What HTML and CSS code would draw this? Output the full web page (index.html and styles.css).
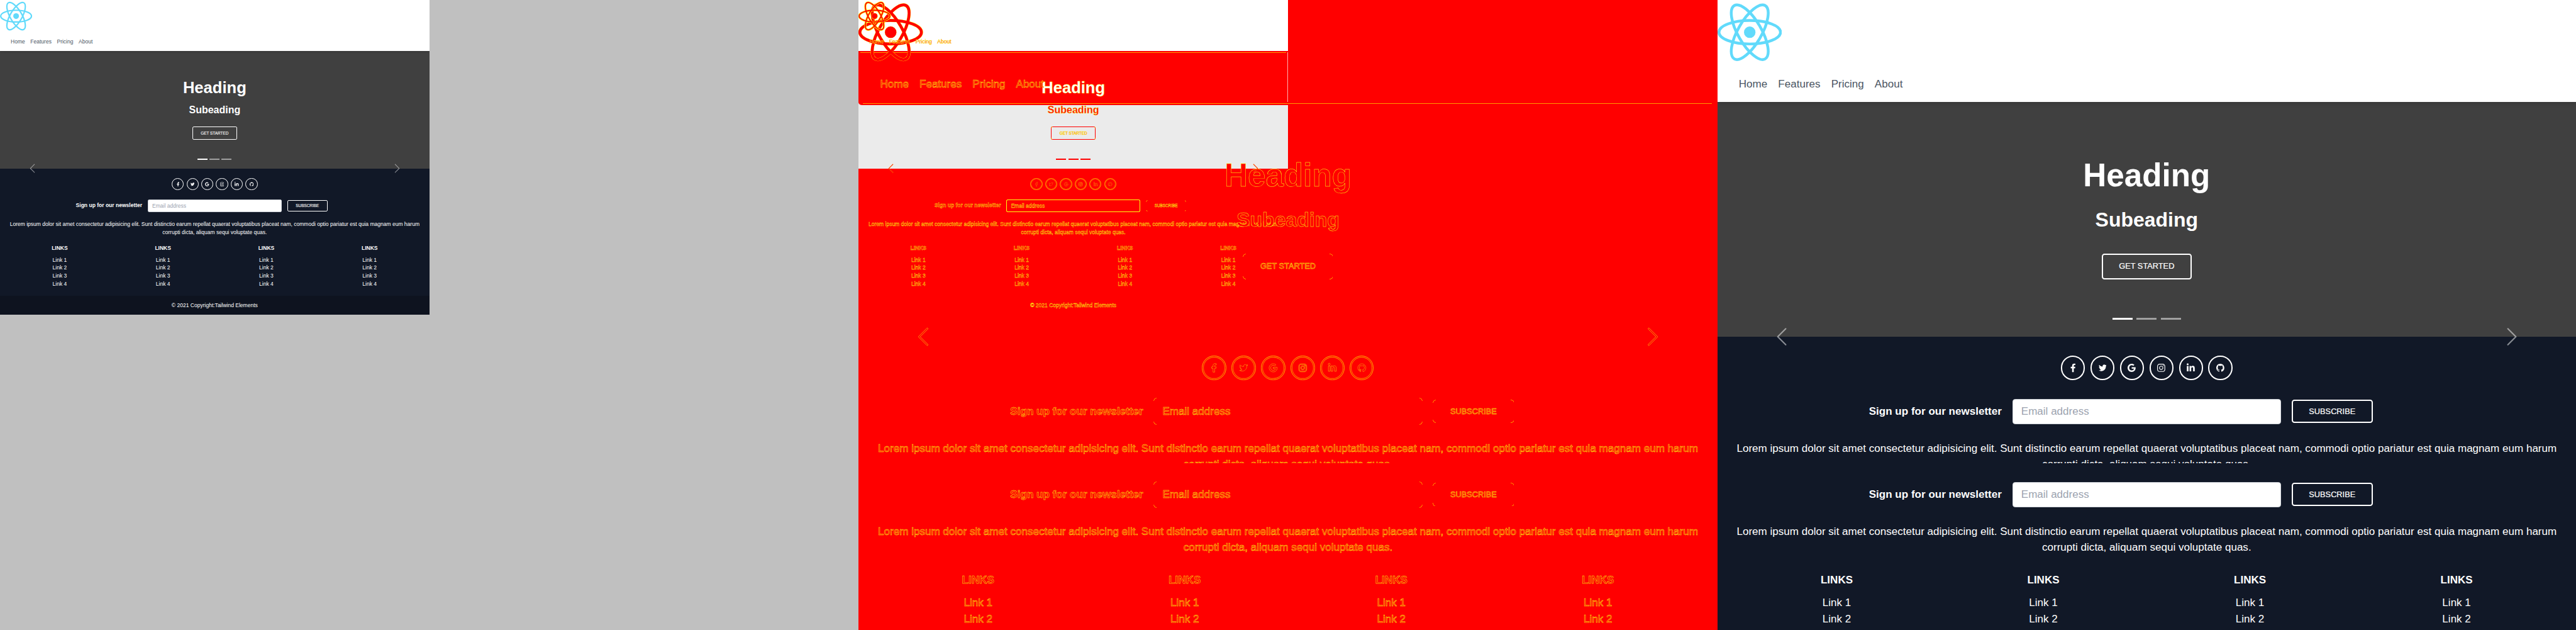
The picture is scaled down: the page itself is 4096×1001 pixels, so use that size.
FILE: index.html
```html
<!DOCTYPE html>
<html lang="en">
<head>
<meta charset="utf-8">
<title>Visual comparison</title>
<link rel="stylesheet" href="styles.css">
</head>
<body>
<main class="compare">
  <section class="panel panel-before">
    <div class="slice slice-full small" data-page></div>
  </section>
  <section class="panel panel-diff">
    <div class="match match-nav"></div>
    <div class="match match-hero"></div>
    <div class="edge edge-upper"></div>
    <div class="edge edge-lower"></div>
    <div class="edge-side"></div>
    <div class="layer large outline" data-stitched></div>
    <div class="layer small outline outline-small" data-page></div>
  </section>
  <section class="panel panel-after">
    <div class="large" data-stitched></div>
  </section>
</main>

<template id="page">
  <div class="page">
    <nav class="nav">
      <svg class="logo" viewBox="-11.5 -10.23174 23 20.46348">
        <g class="logo-rim">
          <circle r="2.05"/>
          <ellipse rx="11" ry="4.2"/>
          <ellipse rx="11" ry="4.2" transform="rotate(60)"/>
          <ellipse rx="11" ry="4.2" transform="rotate(120)"/>
        </g>
        <circle r="2.05" class="logo-core"/>
        <g class="logo-orbits">
          <ellipse rx="11" ry="4.2"/>
          <ellipse rx="11" ry="4.2" transform="rotate(60)"/>
          <ellipse rx="11" ry="4.2" transform="rotate(120)"/>
        </g>
      </svg>
      <div class="nav-links"><a>Home</a><a>Features</a><a>Pricing</a><a>About</a></div>
    </nav>
    <header class="hero">
      <h1>Heading</h1>
      <h2>Subeading</h2>
      <a class="btn btn-hero">GET STARTED</a>
      <div class="indicators"><i class="on"></i><i></i><i></i></div>
      <svg class="chev chev-prev" viewBox="0 0 16 16"><path d="M11.354 1.646a.5.5 0 0 1 0 .708L5.707 8l5.647 5.646a.5.5 0 0 1-.708.708l-6-6a.5.5 0 0 1 0-.708l6-6a.5.5 0 0 1 .708 0z"/></svg>
      <svg class="chev chev-next" viewBox="0 0 16 16"><path d="M4.646 1.646a.5.5 0 0 1 .708 0l6 6a.5.5 0 0 1 0 .708l-6 6a.5.5 0 0 1-.708-.708L10.293 8 4.646 2.354a.5.5 0 0 1 0-.708z"/></svg>
    </header>
    <footer class="footer">
      <div class="footer-body">
        <div class="social">
          <a><svg class="fb" viewBox="0 0 320 512"><path d="M279.14 288l14.22-92.66h-88.91v-60.13c0-25.35 12.42-50.06 52.24-50.06h40.42V6.26S260.43 0 225.36 0c-73.22 0-121.08 44.38-121.08 124.72v70.62H22.89V288h81.39v224h100.17V288z"/></svg></a>
          <a><svg viewBox="0 0 512 512"><path d="M459.37 151.716c.325 4.548.325 9.097.325 13.645 0 138.72-105.583 298.558-298.558 298.558-59.452 0-114.68-17.219-161.137-47.106 8.447.974 16.568 1.299 25.34 1.299 49.055 0 94.213-16.568 130.274-44.832-46.132-.975-84.792-31.188-98.112-72.772 6.498.974 12.995 1.624 19.818 1.624 9.421 0 18.843-1.3 27.614-3.573-48.081-9.747-84.143-51.98-84.143-102.985v-1.299c13.969 7.797 30.214 12.67 47.431 13.319-28.264-18.843-46.781-51.005-46.781-87.391 0-19.492 5.197-37.36 14.294-52.954 51.655 63.675 129.3 105.258 216.365 109.807-1.624-7.797-2.599-15.918-2.599-24.04 0-57.828 46.782-104.934 104.934-104.934 30.213 0 57.502 12.67 76.67 33.137 23.715-4.548 46.456-13.32 66.599-25.34-7.798 24.366-24.366 44.833-46.132 57.827 21.117-2.273 41.584-8.122 60.426-16.243-14.292 20.791-32.161 39.308-52.628 54.253z"/></svg></a>
          <a><svg viewBox="0 0 488 512"><path d="M488 261.8C488 403.3 391.1 504 248 504 110.8 504 0 393.2 0 256S110.8 8 248 8c66.8 0 123 24.5 166.3 64.9l-67.5 64.9C258.5 52.6 94.3 116.6 94.3 256c0 86.5 69.1 156.6 153.7 156.6 98.2 0 135-70.4 140.8-106.9H248v-85.3h236.1c2.3 12.7 3.9 24.9 3.9 41.4z"/></svg></a>
          <a><svg viewBox="0 0 448 512"><path d="M224.1 141c-63.6 0-114.9 51.3-114.9 114.9s51.3 114.9 114.9 114.9S339 319.5 339 255.900 287.700 141 224.100 141zm0 189.600c-41.100 0-74.700-33.500-74.700-74.700s33.500-74.700 74.700-74.700 74.700 33.500 74.700 74.700-33.600 74.700-74.700 74.700zm146.400-194.300c0 14.900-12 26.800-26.800 26.800-14.900 0-26.800-12-26.800-26.800s12-26.800 26.800-26.800 26.800 12 26.800 26.800zm76.100 27.200c-1.700-35.900-9.900-67.700-36.200-93.900-26.200-26.200-58-34.400-93.900-36.200-37-2.100-147.900-2.100-184.900 0-35.800 1.700-67.600 9.900-93.900 36.100s-34.400 58-36.200 93.900c-2.100 37-2.100 147.900 0 184.900 1.700 35.900 9.900 67.700 36.200 93.900s58 34.400 93.900 36.200c37 2.100 147.900 2.100 184.900 0 35.900-1.700 67.700-9.900 93.900-36.200 26.200-26.200 34.400-58 36.200-93.900 2.100-37 2.100-147.800 0-184.800zM398.800 388c-7.800 19.600-22.900 34.700-42.600 42.600-29.500 11.700-99.500 9-132.100 9s-102.700 2.600-132.100-9c-19.600-7.800-34.700-22.900-42.600-42.600-11.700-29.500-9-99.500-9-132.100s-2.600-102.700 9-132.100c7.800-19.600 22.900-34.700 42.600-42.600 29.500-11.700 99.500-9 132.100-9s102.700-2.600 132.100 9c19.600 7.800 34.700 22.900 42.600 42.600 11.700 29.500 9 99.500 9 132.100s2.700 102.700-9 132.100z"/></svg></a>
          <a><svg viewBox="0 0 448 512"><path d="M100.28 448H7.4V148.9h92.88zM53.79 108.100C24.090 108.100 0 83.500 0 53.800a53.790 53.790 0 0 1 107.580 0c0 29.700-24.100 54.300-53.790 54.300zM447.900 448h-92.680V302.400c0-34.700-.7-79.200-48.290-79.200-48.290 0-55.690 37.700-55.690 76.700V448h-92.780V148.900h89.080v40.800h1.300c12.400-23.500 42.690-48.300 87.880-48.300 94 0 111.280 61.900 111.280 142.300V448z"/></svg></a>
          <a><svg viewBox="0 0 16 16"><path d="M8 0C3.58 0 0 3.58 0 8c0 3.54 2.29 6.530 5.470 7.590.4.070.55-.17.55-.38 0-.19-.01-.82-.01-1.490-2.010.37-2.530-.49-2.690-.94-.09-.23-.48-.94-.82-1.130-.28-.15-.68-.52-.01-.53.63-.01 1.080.58 1.230.82.72 1.210 1.870.87 2.330.66.07-.52.28-.87.51-1.070-1.780-.2-3.640-.89-3.640-3.950 0-.87.31-1.590.82-2.150-.08-.2-.36-1.020.08-2.120 0 0 .67-.21 2.200.82.64-.18 1.320-.27 2-.27s1.360.09 2 .27c1.530-1.040 2.200-.82 2.200-.82.44 1.100.16 1.920.08 2.120.51.56.82 1.270.82 2.150 0 3.070-1.870 3.750-3.650 3.950.29.25.54.73.54 1.480 0 1.070-.01 1.930-.01 2.200 0 .21.15.46.55.38A8.010 8.010 0 0 0 16 8c0-4.420-3.580-8-8-8z"/></svg></a>
        </div>
        <div class="signup">
          <strong>Sign up for our newsletter</strong>
          <div class="field">Email address</div>
          <div><a class="btn btn-sub">SUBSCRIBE</a></div>
        </div>
        <p class="lorem">Lorem ipsum dolor sit amet consectetur adipisicing elit. Sunt distinctio earum repellat quaerat voluptatibus placeat nam, commodi optio pariatur est quia magnam eum harum<br>corrupti dicta, aliquam sequi voluptate quas.</p>
        <div class="link-grid">
          <ul><li class="title">LINKS</li><li>Link 1</li><li>Link 2</li><li>Link 3</li><li>Link 4</li></ul>
          <ul><li class="title">LINKS</li><li>Link 1</li><li>Link 2</li><li>Link 3</li><li>Link 4</li></ul>
          <ul><li class="title">LINKS</li><li>Link 1</li><li>Link 2</li><li>Link 3</li><li>Link 4</li></ul>
          <ul><li class="title">LINKS</li><li>Link 1</li><li>Link 2</li><li>Link 3</li><li>Link 4</li></ul>
        </div>
      </div>
      <div class="copyright">© 2021 Copyright:Tailwind Elements</div>
    </footer>
  </div>
</template>
<script src="app.js"></script>
</body>
</html>
```
FILE: styles.css
```css
* { box-sizing: border-box; margin: 0; padding: 0; }
body { background: #c0c0c0; font-family: "Liberation Sans", Arial, sans-serif; overflow: hidden; }
.compare { display: grid; grid-template-columns: repeat(3, 1fr); width: 4096px; height: 1001px; }
.panel { position: relative; overflow: hidden; }
.small { zoom: 0.533333; }
.large { zoom: 1.066667; }
.slice { width: 1280px; overflow: hidden; }
.slice-full { height: 938px; }
.slice-top { height: 690px; }
.slice-rest { height: 250px; }
.slice-rest .page { margin-top: -566.2px; }

/* one captured page, 1280 wide */
.page { width: 1280px; height: 938px; font-size: 16px; line-height: 24px; color: #fff; }
.nav { position: relative; z-index: 2; height: 152px; background: #fff; box-shadow: 0 4px 6px -1px rgba(0,0,0,.1), 0 2px 4px -1px rgba(0,0,0,.06); }
.logo { display: block; width: 96px; height: 96px; }
.logo-rim { display: none; fill: none; }
.logo-core { fill: #61dafb; }
.logo-orbits { fill: none; stroke: #61dafb; stroke-width: 1; }
.nav-links { display: flex; gap: 16px; padding: 17px 32px 15px; color: #4b5563; }
.hero { position: relative; z-index: 1; height: 350px; background: #404040; display: flex; flex-direction: column; align-items: center; justify-content: center; }
.hero h1 { font-size: 48px; line-height: 48px; margin-bottom: 24px; }
.hero h2 { font-size: 30px; line-height: 36px; margin-bottom: 32px; }
.btn { position: relative; display: inline-block; border: 2px solid #fff; border-radius: 4px; font-size: 12px; line-height: 15px; white-space: nowrap; -webkit-text-stroke: 0.2px currentColor; }
.btn-hero { padding: 10px 24px; }
.btn-sub { padding: 8px 24px; display: block; }
.indicators { position: absolute; bottom: 26px; left: 589px; display: flex; gap: 6px; }
.indicators i { width: 30px; height: 3px; background: #fff; opacity: .5; }
.indicators .on { opacity: 1; }
.chev { position: absolute; top: 334px; width: 32px; height: 32px; fill: #fff; opacity: .5; }
.chev-prev { left: 80px; }
.chev-next { right: 80px; }
.footer { background: #111827; text-align: center; }
.footer-body { padding: 28px 24px 24px; }
.social { display: flex; justify-content: center; gap: 8px; }
.social a { display: flex; align-items: center; justify-content: center; width: 36px; height: 36px; border: 2px solid #fff; border-radius: 50%; }
.social svg { width: 12px; height: 14px; fill: #fff; }
.social .fb { width: 8px; }
.signup { display: grid; grid-template-columns: repeat(3, 400px); gap: 16px; align-items: center; margin: 28px 0 24px; }
.signup strong { text-align: right; }
.signup > div:last-child { display: flex; }
.field { position: relative; height: 38px; padding: 6px 12px; background: #fff; border: 1px solid #d1d5db; border-radius: 4px; color: #9ca3af; text-align: left; }
.lorem { white-space: nowrap; margin-bottom: 24.5px; }
.link-grid { display: grid; grid-template-columns: repeat(4, 1fr); margin-bottom: -.5px; }
.link-grid ul { list-style: none; }
.title { font-weight: 700; margin-bottom: 10px; }
.copyright { height: 56px; padding: 16px; background: #0e131f; }

/* difference panel */
.panel-diff { background: #f00; }
.match { position: absolute; left: 0; width: 682.67px; }
.match-nav { top: 0; height: 81px; background: #fff; }
.match-hero { top: 162px; height: 105.7px; background: #ebebeb; }
.match-hero::before { content: ""; position: absolute; left: 0; top: 0; width: 100%; height: 4.5px; background: #f00; border-bottom-left-radius: 6px 4.5px; }
.edge { position: absolute; height: 1px; background: #fc0; opacity: .75; }
.edge-upper { left: 3px; top: 83px; width: 677px; }
.edge-lower { left: 7px; top: 164px; width: 1350px; }
.edge-side { position: absolute; left: 682px; top: 83px; width: 1px; height: 79px; background: #ffb0b0; }
.layer { position: absolute; left: 0; top: 0; }
.outline .page, .outline .page * { background: none; color: #f00; box-shadow: none; -webkit-text-stroke: 0.42px #fbff14; opacity: 1; }
.outline .logo-core { fill: #f00; }
.outline .logo-orbits { stroke: #f00; }
.outline .logo-rim { display: block; stroke: #ff0; stroke-width: 1.13; }
.outline .logo-rim circle { stroke-width: .13; }
.outline .social svg, .outline .chev { fill: #f00; stroke: #fbff14; }
.outline .social svg { stroke-width: 16; overflow: visible; }
.outline .social a:last-child svg { stroke-width: .5; }
.outline .chev { stroke-width: .25; }
.outline .btn, .outline .field { border-color: transparent; }
.outline .btn::after, .outline .field::after {
  content: ""; position: absolute; inset: -2px; border: 1px solid #ff0; border-radius: 5px; opacity: .7;
  -webkit-mask: linear-gradient(#000 0 0) 0 0 / 5px 5px no-repeat, linear-gradient(#000 0 0) 100% 0 / 5px 5px no-repeat, linear-gradient(#000 0 0) 0 100% / 5px 5px no-repeat, linear-gradient(#000 0 0) 100% 100% / 5px 5px no-repeat;
}
.outline .social a { border: 1px solid rgba(255,255,0,.6); box-shadow: inset 0 0 0 1px #f00, inset 0 0 0 2px rgba(255,255,0,.45); }
.outline .indicators { visibility: hidden; }
.outline-small .page, .outline-small .page * { -webkit-text-stroke-width: .6px; }
.outline-small .logo-rim { stroke-width: 1.5; }
.outline-small .logo-rim circle { stroke-width: .5; }
.outline-small .logo-orbits { stroke-width: .8; }
.outline-small .page .indicators { visibility: visible; }
.outline-small .page .indicators i { background: #f00; }
.outline-small .btn-hero { border-color: #f00; }
.outline-small .field { border-color: #fbff14; }
.outline-small .page h1 { color: #fff; }
```
FILE: app.js
```js
const template = document.getElementById('page');

function addPage(host) {
  host.appendChild(template.content.cloneNode(true));
}

document.querySelectorAll('[data-page]').forEach(addPage);

// The tall capture is stitched from two scroll positions.
document.querySelectorAll('[data-stitched]').forEach((host) => {
  ['slice slice-top', 'slice slice-rest'].forEach((name) => {
    const slice = document.createElement('div');
    slice.className = name;
    addPage(slice);
    host.appendChild(slice);
  });
});
```
